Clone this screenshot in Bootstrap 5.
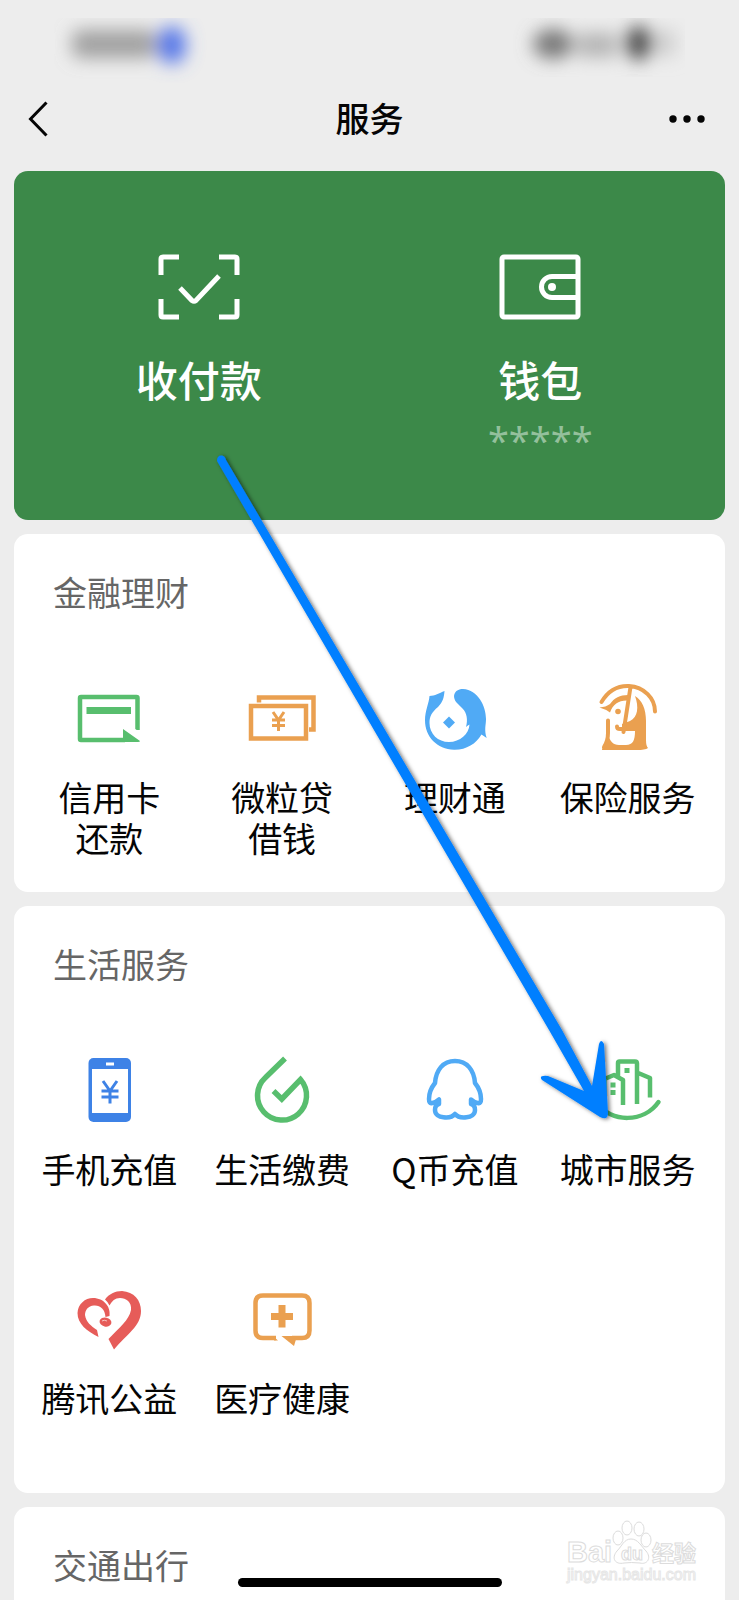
<!DOCTYPE html>
<html lang="zh-CN">
<head>
<meta charset="utf-8">
<meta name="viewport" content="width=device-width, initial-scale=1">
<title>服务</title>
<link rel="stylesheet" href="https://cdn.jsdelivr.net/npm/bootstrap@5.3.0/dist/css/bootstrap.min.css">
<style>
body{background:#ededed;color:#050505;font-family:"Noto Sans CJK SC",sans-serif;font-size:34px;line-height:41px}
svg{display:block}
a{color:inherit;text-decoration:none}
.status-strip{height:85px;padding:18px 54px 0}
.nav-strip{height:64px;padding:0 28px;margin-bottom:22px}
.nav-strip h1{font-size:34px;line-height:41px;font-weight:500}
.plain-btn{background:none;border:0;padding:4px 0 0}
.stack{gap:14px;padding:0 14px}
.pay-panel{background:#3c8949;color:#fff;border-radius:14px;padding:76px 14px 55px}
.pay-panel a{font-size:42px;line-height:52px;font-weight:500;min-height:217px}
.pay-panel svg{margin-bottom:26px}
.masked{font-family:"Noto Sans",sans-serif;font-size:38px;line-height:50px;font-weight:400;color:#94c09c;margin-top:10px}
.group{background:#fff;border-radius:14px;padding:37px 11px 33px 9px}
.group h2{font-size:34px;line-height:41px;font-weight:400;color:#666;margin:0 0 66px;padding-left:30px}
.tiles{row-gap:48px}
.tile{min-height:181px}
.tile svg{margin-bottom:18px}
.last-group{border-radius:14px 14px 0 0;padding-bottom:16px}
.last-group h2{margin:0}
.home-bar{width:264px;height:9px;border-radius:5px;background:#000;bottom:14px}
.pointer{left:0;top:0;pointer-events:none}
.watermark{right:35px;bottom:12px}
</style>
</head>
<body>
<div class="position-relative d-flex flex-column min-vh-100">
  <div class="status-strip d-flex justify-content-between" aria-hidden="true">
    <svg width="160" height="67" viewBox="0 0 160 67">
      <defs><filter id="soft" x="-50%" y="-50%" width="200%" height="200%"><feGaussianBlur stdDeviation="9"/></filter></defs>
      <g filter="url(#soft)"><rect x="18" y="12" width="84" height="28" rx="8" fill="#8d8d8d" opacity=".8"/><ellipse cx="118" cy="27" rx="14" ry="19" fill="#5274e8"/></g>
    </svg>
    <svg width="180" height="67" viewBox="0 0 180 67">
      <g filter="url(#soft)"><ellipse cx="48" cy="26" rx="20" ry="15" fill="#777"/><rect x="72" y="15" width="40" height="24" fill="#b4b4b4"/><ellipse cx="134" cy="25" rx="14" ry="17" fill="#505050"/><rect x="152" y="12" width="18" height="26" fill="#ccc"/></g>
    </svg>
  </div>
  <header class="nav-strip d-flex align-items-center justify-content-between">
    <button class="plain-btn" type="button" aria-label="返回"><svg width="42" height="38" viewBox="0 0 42 38"><path d="M18.500 2.500 2.500 19 18.500 35.500" fill="none" stroke="#050505" stroke-width="3"/></svg></button>
    <h1 class="m-0">服务</h1>
    <button class="plain-btn" type="button" aria-label="更多"><svg width="42" height="38" viewBox="0 0 42 38"><g fill="#050505"><circle cx="4" cy="19" r="3.700"/><circle cx="18" cy="19" r="3.700"/><circle cx="32" cy="19" r="3.700"/></g></svg></button>
  </header>
  <main class="stack d-flex flex-column flex-grow-1">
    <section class="pay-panel">
      <div class="row g-0 text-center">
        <a class="col-6 d-flex flex-column align-items-center" href="#">
          <svg width="84" height="80" viewBox="0 0 84 80"><g fill="none" stroke="#fff" stroke-width="5"><path d="M22 10H6Q4 10 4 12V28M62 10H78Q80 10 80 12V28M22 70H6Q4 70 4 68V52M62 70H78Q80 70 80 68V52"/><path d="M23 41 35 53.500Q37 55 39 53.500L62 29"/></g></svg>
          <span>收付款</span>
        </a>
        <a class="col-6 d-flex flex-column align-items-center" href="#">
          <svg width="84" height="80" viewBox="0 0 84 80"><g fill="none" stroke="#fff" stroke-width="5"><rect x="4" y="10" width="76" height="60" rx="2"/><path d="M80 29.500H54A10.500 10.500 0 0 0 54 50.500H80"/></g><circle cx="54" cy="40" r="4" fill="#fff"/></svg>
          <span>钱包</span>
          <span class="masked">*****</span>
        </a>
      </div>
    </section>

    <section class="group">
      <h2>金融理财</h2>
      <div class="tiles row gx-0 text-center">
        <a class="tile col-3 d-flex flex-column align-items-center" href="#">
          <svg width="80" height="80" viewBox="0 0 80 80"><path d="M68.500 52V20Q68.500 19 67.500 19H12Q11 19 11 20V61Q11 62 12 62H56" fill="none" stroke="#58be6e" stroke-width="4.500"/><path d="M17.500 29H62V36H17.500ZM54 51 71 63Q71 64 69 64H54Z" fill="#58be6e"/><path d="M65 52 73 57.500" stroke="#fff" stroke-width="3"/></svg>
          <span>信用卡<br>还款</span>
        </a>
        <a class="tile col-3 d-flex flex-column align-items-center" href="#">
          <svg width="80" height="80" viewBox="0 0 80 80"><g fill="none" stroke="#eaa050" stroke-width="4.500"><rect x="9" y="28" width="55" height="32.500"/><path d="M17 24.500V19.500H71.500V51.500H67"/></g><path d="M31 34 36.500 42 42 34M36.500 42V53M30 42H43M30 47.500H43" fill="none" stroke="#eaa050" stroke-width="3"/></svg>
          <span>微粒贷<br>借钱</span>
        </a>
        <a class="tile col-3 d-flex flex-column align-items-center" href="#">
          <svg width="80" height="80" viewBox="0 0 80 80"><path d="M14.500 18C20 18 24 15 29.500 13C29 19 28 24 23 29C17 34 14.500 38 14.500 45C14.500 56 23 64 34 64C45 64 54 56 54.500 46.500Q53 47 51 49C53 42 52 35 47.500 30.500L42 25C36 18 40 11 48 11C63 12 71 28 71 41C71 47 69 52 71.700 60L66.500 56.500C61 66 51 72 39 71.700C22 71 10 59 10 42C10 33 14 25 14.500 18Z" fill="#50aaf5"/><path d="M34 38.500 40 44.500 34 50.500 28 44.500Z" fill="#50aaf5"/></svg>
          <span>理财通</span>
        </a>
        <a class="tile col-3 d-flex flex-column align-items-center" href="#">
          <svg width="80" height="80" viewBox="0 0 80 80"><path d="M47 18C54 22 58 31 58 43V62Q58 68 60 70Q57 72 49 72H14Q14 69 18 65L20 57C22 63 25 67 31 67H38C45 67 47 62 47 53H34V46L42 43C50 39 51 29 47 18Z" fill="#eaa050"/><path d="M11.500 29.500Q18 29 22 26C26 20 32 17 40 17V22.500C31 22 25 26 22 34.500Q17 31 11.500 29.500Z" fill="#eaa050"/><circle cx="30" cy="33.500" r="2.800" fill="#eaa050"/><path d="M20 42.500V55Q20 63 16 69M13.500 24C20 13 30 7.500 41 8C56 9 67 20 67 33.500M42.500 9 35.500 54M29 48.500Q29 51 32 51H37" fill="none" stroke="#eaa050" stroke-width="4" stroke-linecap="round"/></svg>
          <span>保险服务</span>
        </a>
      </div>
    </section>

    <section class="group">
      <h2>生活服务</h2>
      <div class="tiles row gx-0 text-center">
        <a class="tile col-3 d-flex flex-column align-items-center" href="#">
          <svg width="80" height="80" viewBox="0 0 80 80"><rect x="19.500" y="8" width="42.500" height="64" rx="5" fill="#3e82e6"/><path d="M23 19H59V63H23ZM37 12.500H45V15.500H37Z" fill="#fff"/><path d="M34 31 41 41 48 31M41 41V53.500M32.500 41H49.500M32.500 47H49.500" fill="none" stroke="#3e82e6" stroke-width="3"/></svg>
          <span>手机充值</span>
        </a>
        <a class="tile col-3 d-flex flex-column align-items-center" href="#">
          <svg width="80" height="80" viewBox="0 0 80 80"><path d="M43 8.500 23.500 27.500A24.500 24.500 0 1 0 58.500 29.500L39.800 49 31.500 41" fill="none" stroke="#58be6e" stroke-width="5.500"/></svg>
          <span>生活缴费</span>
        </a>
        <a class="tile col-3 d-flex flex-column align-items-center" href="#">
          <svg width="80" height="80" viewBox="0 0 80 80"><path d="M40 11C28 11 21 20 20 33C16 38 14 43 14 49Q14 54 17 53Q20 53 24 49.500V54Q20 55 20 60C20 69 36 69 40 64C44 69 60 69 60 60Q60 55 56 54V49.500Q60 53 63 53Q66 54 66 49C66 43 64 38 60 33C59 20 52 11 40 11Z" fill="none" stroke="#50aaf5" stroke-width="4.500" stroke-linejoin="round"/></svg>
          <span>Q币充值</span>
        </a>
        <a class="tile col-3 d-flex flex-column align-items-center" href="#">
          <svg width="80" height="80" viewBox="0 0 80 80"><g fill="none" stroke="#58be6e" stroke-width="4.500" stroke-linejoin="round"><path d="M16.500 54V29L26 25 35 30V55M30 26V13Q30 11.500 31.500 11.500H47Q49 11.500 49 13.500V54M49 22.500 62 28V47.500"/><path d="M9 53C23 73 56 73 70.500 52" stroke-linecap="round"/></g><path d="M36.500 18H41.500V23H36.500ZM22.500 32.500H27.500V37.500H22.500ZM22.500 40H27.500V45H22.500Z" fill="#58be6e"/></svg>
          <span>城市服务</span>
        </a>
        <a class="tile col-3 d-flex flex-column align-items-center" href="#">
          <svg width="80" height="80" viewBox="0 0 80 80"><g fill="#e65c59"><path d="M29.500 58C18 52 8.500 45 8.500 34C9 25 16 19 24 19C35 19 42 28 40.500 37L36.500 38C36 30 31 26 25 26.500C19 27 16 31 16 36C17 43 22 47 28 51Z"/><path d="M36 20.500C40 15 46 12 53 12C65 13 72 21 72 32C72 47 58 55 45 70.500L39.500 60C51 48 60 41 62 31C63 23 57 19 51 19C46 19 43 22 40.500 26.500Q39 23 36 20.500Z"/><ellipse cx="36.500" cy="43" rx="6" ry="4.500" transform="rotate(12 36 43)"/></g><path d="M33 42Q35 40.500 38 42" fill="none" stroke="#f7c4c2" stroke-width="1"/></svg>
          <span>腾讯公益</span>
        </a>
        <a class="tile col-3 d-flex flex-column align-items-center" href="#">
          <svg width="80" height="80" viewBox="0 0 80 80"><path d="M34 59H21Q13.500 59 13.500 51.500V24Q13.500 16.500 21 16.500H60Q67.500 16.500 67.500 24V51.500Q67.500 59 60 59H50" fill="none" stroke="#eaa050" stroke-width="4.500"/><path d="M31 57 36 61.500H32ZM39.500 57H55L52 67ZM36.500 26H43.500V34H51V41H43.500V48.500H36.500V41H29V34H36.500Z" fill="#eaa050"/></svg>
          <span>医疗健康</span>
        </a>
      </div>
    </section>

    <section class="group last-group flex-grow-1">
      <h2>交通出行</h2>
    </section>
  </main>

  <svg class="pointer position-absolute" width="640" height="1140" viewBox="0 0 640 1140" aria-hidden="true">
    <defs><filter id="drop" x="-10%" y="-10%" width="120%" height="120%"><feDropShadow dx="2" dy="1" stdDeviation="2" flood-color="#000" flood-opacity=".55"/></filter></defs>
    <path d="M217 461Q217 455 222 455.500Q225 456 226 460L562 1030 592 1086 599 1044Q601 1038 604 1044L608 1113Q608 1121 600 1117L542 1080Q538 1075 548 1076L584 1091 549 1030Z" fill="#007fff" filter="url(#drop)"/>
  </svg>
  <svg class="watermark position-absolute" width="140" height="72" viewBox="0 0 140 72" role="img" aria-label="Baidu 经验">
    <g fill="#fff" stroke="#dcdcdc" stroke-width="1">
      <text x="3" y="45" font-family="Liberation Sans, sans-serif" font-size="29" font-weight="700">Bai</text>
      <ellipse cx="54" cy="21" rx="5" ry="7"/><ellipse cx="63" cy="11" rx="5" ry="7"/><ellipse cx="75" cy="12" rx="5" ry="7"/><ellipse cx="82" cy="23" rx="5" ry="7"/>
      <path d="M67 22C74 22 77 29 82 34C88 41 83 48 76 46Q67 45 60 46C51 48 47 41 53 34C58 29 60 22 67 22Z"/>
      <text x="57" y="43" font-family="Liberation Sans, sans-serif" font-size="18" font-weight="700">du</text>
      <text x="88" y="44" font-family="Noto Sans CJK SC, sans-serif" font-size="22" font-weight="700">经验</text>
      <text x="3" y="63" font-family="Liberation Sans, sans-serif" font-size="16" stroke="#e6e6e6">jingyan.baidu.com</text>
    </g>
  </svg>
  <div class="home-bar position-absolute start-50 translate-middle-x"></div>
</div>
<script src="https://cdn.jsdelivr.net/npm/bootstrap@5.3.0/dist/js/bootstrap.bundle.min.js"></script>
</body>
</html>
